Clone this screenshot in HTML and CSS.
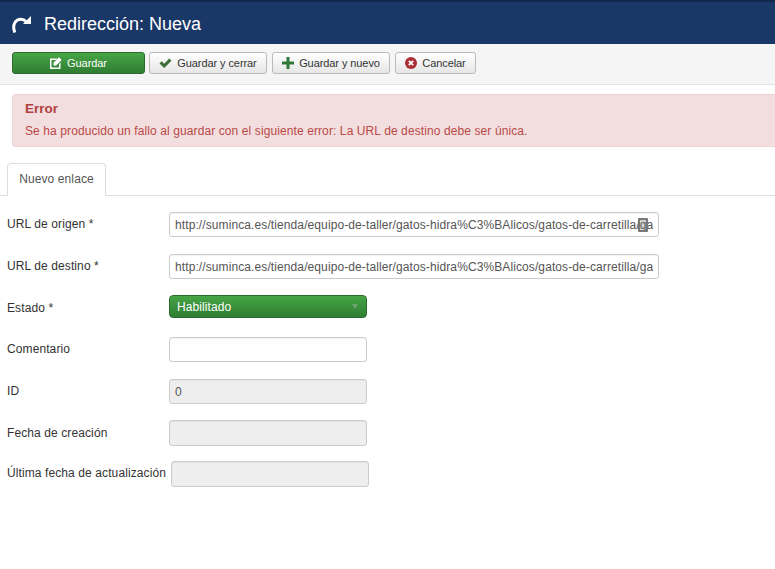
FILE: index.html
```html
<!DOCTYPE html>
<html lang="es">
<head>
<meta charset="utf-8">
<title>Redirección: Nueva</title>
<link rel="stylesheet" href="styles.css">
</head>
<body>
<header class="title-bar">
  <svg class="title-icon" viewBox="0 0 20 17" width="20" height="17"><path d="M3.800 16.500C1 9.500 4 3.200 10 3.200c2 0 3.500.6 5 2.300" fill="none" stroke="#fff" stroke-width="3"/><path d="M20 0V8H12z" fill="#fff"/></svg>
  <h1 class="title">Redirección: Nueva</h1>
</header>
<div class="toolbar">
  <button class="btn btn-save">
    <svg class="ico" viewBox="0 0 12 12" width="12" height="12"><path d="M0 1.500h7.500L6 3H1.500v7.500H9V7l1.500-1.500V12H0z" fill="#fff"/><path d="M3.500 5.800L9 .3l2.700 2.700-5.500 5.500H3.500z" fill="#fff"/></svg>
    <span>Guardar</span>
  </button>
  <button class="btn btn-close">
    <svg class="ico" viewBox="0 0 13 12" width="13" height="12"><path d="M.5 6.500l2.200-2.200 2.500 2.500L10.300 1.500l2.200 2.200L5.200 11z" fill="#3b6e3b"/></svg>
    <span>Guardar y cerrar</span>
  </button>
  <button class="btn btn-new">
    <svg class="ico" viewBox="0 0 12 12" width="12" height="12"><path d="M4.500 0h3v4.500H12v3H7.500V12h-3V7.500H0v-3h4.500z" fill="#2f7a38"/></svg>
    <span>Guardar y nuevo</span>
  </button>
  <button class="btn btn-cancel">
    <svg class="ico" viewBox="0 0 12 12" width="12" height="12"><circle cx="6" cy="6" r="6" fill="#a92f35"/><path d="M3.800 3.800L8.200 8.200M8.200 3.800L3.800 8.200" stroke="#fff" stroke-width="1.800"/></svg>
    <span>Cancelar</span>
  </button>
</div>
<main class="content">
  <div class="alert">
    <h4 class="alert-heading">Error</h4>
    <p class="alert-text">Se ha producido un fallo al guardar con el siguiente error: La URL de destino debe ser única.</p>
  </div>
  <div class="tabs"><a class="tab">Nuevo enlace</a></div>
  <form class="form">
    <div class="row row-1"><label class="label">URL de origen *</label>
      <div class="field text wide"><span class="value">http://suminca.es/tienda/equipo-de-taller/gatos-hidra%C3%BAlicos/gatos-de-carretilla/ga</span><span class="caret"></span></div></div>
    <div class="row row-2"><label class="label">URL de destino *</label>
      <div class="field text wide"><span class="value">http://suminca.es/tienda/equipo-de-taller/gatos-hidra%C3%BAlicos/gatos-de-carretilla/ga</span></div></div>
    <div class="row row-3"><label class="label label-select">Estado *</label>
      <div class="select"><span>Habilitado</span><span class="arrow"></span></div></div>
    <div class="row row-4"><label class="label">Comentario</label>
      <div class="field text"></div></div>
    <div class="row row-5"><label class="label">ID</label>
      <div class="field disabled"><span class="value id">0</span></div></div>
    <div class="row row-6"><label class="label">Fecha de creación</label>
      <div class="field disabled"></div></div>
    <div class="row row-7"><label class="label">Última fecha de actualización</label>
      <div class="field disabled"></div></div>
  </form>
</main>
</body>
</html>
```
FILE: styles.css
```css
* { box-sizing: border-box; }
html, body { margin: 0; padding: 0; }
body {
  width: 775px;
  height: 569px;
  overflow: hidden;
  background: #fff;
  color: #333;
  font-family: "Liberation Sans", Arial, sans-serif;
  font-size: 12px;
  letter-spacing: .1px;
}
.title-bar {
  height: 44px;
  display: flex;
  align-items: center;
  padding: 1px 0 0 11px;
  background: #1a3867;
  border-top: 2px solid #12284a;
}
.title-icon { flex: none; margin-top: 1px; }
.title {
  margin: 0 0 0 13px;
  color: #fff;
  font-size: 18px;
  font-weight: normal;
  line-height: 24px;
  letter-spacing: 0;
}
.toolbar {
  height: 41px;
  display: flex;
  gap: 4px;
  padding: 8px 0 0 12px;
  background: #f5f5f5;
  border-bottom: 1px solid #e3e3e3;
}
.btn {
  height: 22px;
  display: flex;
  align-items: center;
  justify-content: center;
  gap: 5px;
  padding: 0;
  font: 11px "Liberation Sans", Arial, sans-serif;
  letter-spacing: -.08px;
  color: #333;
  background: linear-gradient(#fff, #e6e6e6);
  border: 1px solid #bbb;
  border-radius: 3px;
}
.btn-save {
  width: 133px;
  color: #fff;
  background: linear-gradient(#46a546, #2f7d32);
  border-color: #2c6a2e;
}
.btn-close { width: 118px; }
.btn-new { width: 118px; margin-left: 1px; }
.btn-cancel { width: 81px; margin-left: 1px; }
.ico { flex: none; }
.content { padding: 9px 0 0; }
.alert {
  height: 53px;
  margin-left: 12px;
  padding: 6px 12px 0;
  background: #f2dede;
  border: 1px solid #eed3d7;
  border-right: 0;
  border-radius: 4px 0 0 4px;
  color: #b94a48;
}
.alert-heading {
  margin: 0;
  font-size: 13.500px;
  line-height: 16px;
  font-weight: bold;
  letter-spacing: 0;
  color: #b0413e;
}
.alert-text { margin: 7px 0 0; line-height: 15px; }
.tabs {
  height: 33px;
  margin-top: 16px;
  padding-left: 7px;
  border-bottom: 1px solid #ddd;
}
.tab {
  display: block;
  width: 99px;
  height: 33px;
  padding-top: 8px;
  text-align: center;
  line-height: 15px;
  color: #555;
  background: #fff;
  border: 1px solid #ddd;
  border-bottom-color: #fff;
  border-radius: 4px 4px 0 0;
}
.form { display: flex; flex-direction: column; padding: 16px 0 0 7px; }
.row { display: flex; align-items: center; }
.row-2 { margin-top: 17px; }
.row-3 { margin-top: 16px; }
.row-4 { margin-top: 19px; }
.row-5 { margin-top: 17px; }
.row-6 { margin-top: 16px; }
.row-7 { margin-top: 15px; }
.label { min-width: 162px; padding-right: 5px; margin-top: -2px; }
.label-select { margin-top: 2px; }
.row-6 .label { margin-top: 0; }
.field {
  width: 198px;
  height: 25px;
  padding: 0 5px;
  display: flex;
  align-items: center;
  border: 1px solid #ccc;
  border-radius: 3px;
  background: #fff;
  box-shadow: inset 0 1px 1px rgba(0,0,0,.05);
  position: relative;
}
.wide { width: 490px; }
.value { white-space: nowrap; overflow: hidden; color: #555; }
.disabled { background: #eee; }
.row-6 .field, .row-7 .field { height: 26px; }
.id { color: #555; }
.caret {
  position: absolute;
  right: 10px;
  top: 5px;
  width: 10px;
  height: 14px;
  border: 2px solid #777;
  border-radius: 1px;
  background: rgba(120,120,120,.35);
}
.select {
  width: 198px;
  height: 23px;
  padding: 0 8px 0 7px;
  display: flex;
  align-items: center;
  justify-content: space-between;
  color: #fff;
  background: linear-gradient(#46a546, #2f7d32);
  border: 1px solid #2c6a2e;
  border-radius: 4px;
}
.arrow {
  width: 0;
  height: 0;
  border-left: 3.500px solid transparent;
  border-right: 3.500px solid transparent;
  border-top: 5px solid #6da56d;
}
```
